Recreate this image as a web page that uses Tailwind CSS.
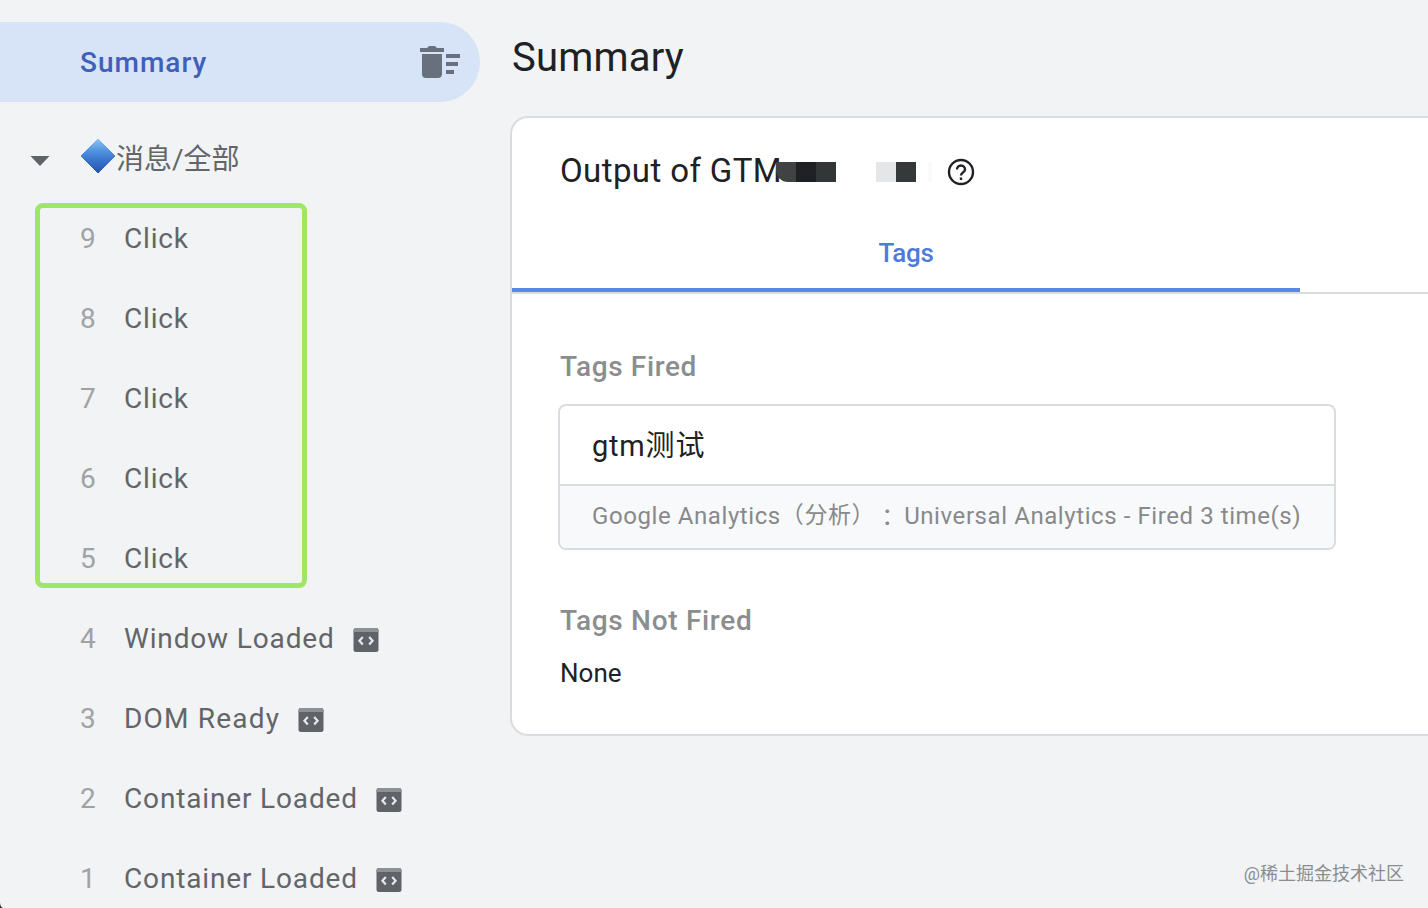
<!doctype html>
<html lang="en">
  <head>
    <meta charset="UTF-8" />
    <meta name="viewport" content="width=device-width, initial-scale=1.0" />
    <title>Tag Assistant - Summary</title>
    <script src="https://cdn.jsdelivr.net/npm/@tailwindcss/browser@4"></script>
  </head>
  <body
    class="relative flex h-screen overflow-hidden bg-[#f1f3f4] font-['Roboto','Noto_Sans_CJK_SC',sans-serif] text-[28px] whitespace-nowrap text-[#636568]"
  >
    <svg class="hidden">
      <symbol id="code" viewBox="0 0 26 24">
        <rect x="0.5" width="25" height="24" rx="2.5" fill="#5f6368" />
        <path d="M3 0h20a2.500 2.500 0 0 1 2.500 2.500V4h-25V2.500A2.500 2.500 0 0 1 3 0z" fill="#8e9194" />
        <path d="M9.800 9 6.400 12.800l3.400 3.800M16.200 9l3.400 3.800-3.400 3.800" fill="none" stroke="#e6e8e9" stroke-width="2.200" />
      </symbol>
    </svg>

    <nav class="w-[480px] shrink-0 pt-[22px]">
      <div class="flex h-20 items-center justify-between rounded-r-full bg-[#d7e3f6] pr-5 pl-20">
        <span class="pt-0.5 font-medium tracking-[1px] text-[#3f60ba]">Summary</span>
        <svg class="h-8 w-10" viewBox="0 0 40 32" fill="#68707d">
          <path d="M0 2h7l2-2h6l2 2h7v4H0zM2 8h20v20a4 4 0 0 1-4 4H6a4 4 0 0 1-4-4zM26 8h14v4H26zM26 16h12v4H26zM26 24h8v4h-8z" />
        </svg>
      </div>
      <div class="mt-4 flex h-20 items-center pl-[30px]">
        <svg class="mt-1.5 h-[10px] w-5" viewBox="0 0 20 10"><path d="M0.500 0h19L10 10z" fill="#5f6368" /></svg>
        <svg class="ml-[30px] -mt-1 h-9 w-9" viewBox="0 0 36 36">
          <defs>
            <linearGradient id="diamond" x1="0" y1="0" x2="0" y2="1">
              <stop offset="0" stop-color="#8cc4f3" />
              <stop offset="0.350" stop-color="#5093e0" />
              <stop offset="0.600" stop-color="#3c77cf" />
              <stop offset="1" stop-color="#2454a8" />
            </linearGradient>
          </defs>
          <path d="M18 1 35 18 18 35 1 18z" fill="url(#diamond)" stroke="url(#diamond)" stroke-linejoin="round" />
        </svg>
        <span class="pt-[3px]">消息/全部</span>
      </div>

      <ul class="relative">
        <li class="flex h-20 items-center pt-0.5 pl-20 tracking-[0.8px]"><span class="w-11 tracking-normal text-[#a0a2a5]">9</span>Click</li>
        <li class="flex h-20 items-center pt-0.5 pl-20 tracking-[0.8px]"><span class="w-11 tracking-normal text-[#a0a2a5]">8</span>Click</li>
        <li class="flex h-20 items-center pt-0.5 pl-20 tracking-[0.8px]"><span class="w-11 tracking-normal text-[#a0a2a5]">7</span>Click</li>
        <li class="flex h-20 items-center pt-0.5 pl-20 tracking-[0.8px]"><span class="w-11 tracking-normal text-[#a0a2a5]">6</span>Click</li>
        <li class="flex h-20 items-center pt-0.5 pl-20 tracking-[0.8px]"><span class="w-11 tracking-normal text-[#a0a2a5]">5</span>Click</li>
        <li class="flex h-20 items-center pt-0.5 pl-20">
          <span class="w-11 text-[#a0a2a5]">4</span>
          <span class="w-[229px] tracking-[0.85px]">Window Loaded</span>
          <svg class="mt-0.5 h-6 w-[26px]"><use href="#code" /></svg>
        </li>
        <li class="flex h-20 items-center pt-0.5 pl-20">
          <span class="w-11 text-[#a0a2a5]">3</span>
          <span class="w-[174px] tracking-[1.2px]">DOM Ready</span>
          <svg class="mt-0.5 h-6 w-[26px]"><use href="#code" /></svg>
        </li>
        <li class="flex h-20 items-center pt-0.5 pl-20">
          <span class="w-11 text-[#a0a2a5]">2</span>
          <span class="w-[252px] tracking-[0.85px]">Container Loaded</span>
          <svg class="mt-0.5 h-6 w-[26px]"><use href="#code" /></svg>
        </li>
        <li class="flex h-20 items-center pt-0.5 pl-20">
          <span class="w-11 text-[#a0a2a5]">1</span>
          <span class="w-[252px] tracking-[0.85px]">Container Loaded</span>
          <svg class="mt-0.5 h-6 w-[26px]"><use href="#code" /></svg>
        </li>
        <!-- highlight around the click events -->
        <div class="absolute top-[5px] left-[35px] h-[385px] w-[272px] rounded-[8px] border-[5px] border-[#9fe666]"></div>
      </ul>
    </nav>

    <main class="ml-[30px] w-[960px] shrink-0 pt-[33px] text-[#202124]">
      <h1 class="h-[83px] pl-0.5 text-[40px] leading-[50px] tracking-[0.2px]">Summary</h1>
      <section class="h-[620px] rounded-[18px] border-2 border-[#dadce0] bg-white">
        <div class="flex h-[106px] items-center pt-0.5 pl-12">
          <h2 class="w-[216px] pb-0.5 text-[33px] tracking-[0.4px]">Output of GTM</h2>
          <div class="flex h-5 w-[171px]">
            <span class="w-5 rounded-bl-xl bg-[#414243]"></span>
            <span class="w-5 bg-[#202124]"></span>
            <span class="w-5 bg-[#333637]"></span>
            <span class="ml-10 w-5 bg-[#e4e6e7]"></span>
            <span class="w-5 bg-[#36393a]"></span>
            <span class="ml-3 w-1 bg-[#fafafa]"></span>
          </div>
          <svg class="h-7 w-7" viewBox="0 0 28 28" fill="none" stroke="#202124" stroke-width="2.400">
            <circle cx="14" cy="14" r="12" />
            <path d="M10 11.500a4 4 0 0 1 8 0c0 2.800-4 3-4 6" />
            <path d="M14 19.500v2.500" />
          </svg>
        </div>
        <div class="h-[70px] border-b-2 border-[#dadce0]">
          <div class="flex h-[68px] w-[788px] items-center justify-center border-b-4 border-[#5b87e6] pb-1.5 text-[26px] font-medium tracking-[-0.3px] text-[#4d7bdb]">Tags</div>
        </div>
        <div class="pt-[53px] pl-[46px]">
          <h3 class="h-[57px] pl-0.5 text-[28px] leading-10 font-medium tracking-[0.65px] text-[#8b8d8f]">Tags Fired</h3>
          <div class="h-[146px] w-[778px] overflow-hidden rounded-lg border-2 border-[#dadce0]">
            <div class="flex h-20 items-center border-b-2 border-[#dadce0] pt-[3px] pl-8 text-[29px] tracking-[0.8px]">gtm测试</div>
            <div class="flex h-[62px] items-center bg-[#f8f9fa] pb-0.5 pl-8 text-[24px] tracking-[0.58px] text-[#87898b]">
              <span>Google Analytics</span>
              <span class="text-[23px] [text-spacing-trim:space-all]">（分析）</span>
              <span class="w-[29px] font-['Noto_Sans_CJK_TC']" lang="zh-TW">：</span>
              <span>Universal Analytics - Fired 3 time(s)</span>
            </div>
          </div>
          <h3 class="mt-[51px] h-[52px] pl-0.5 text-[28px] leading-10 font-medium tracking-[0.7px] text-[#8b8d8f]">Tags Not Fired</h3>
          <p class="pl-0.5 text-[26px] leading-10">None</p>
        </div>
      </section>
    </main>

    <div class="absolute right-6 bottom-[21px] text-[18px] text-[#8a8d8f]">@稀土掘金技术社区</div>
    <svg class="absolute bottom-0 left-0 h-1.5 w-1" viewBox="0 0 4 6"><path d="M0 0q0 5 3 6H0z" fill="#333" /></svg>
  </body>
</html>
